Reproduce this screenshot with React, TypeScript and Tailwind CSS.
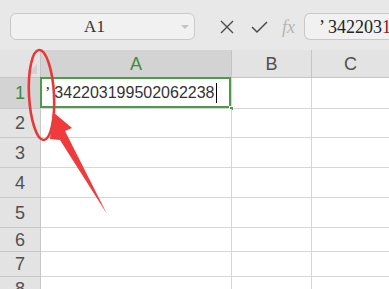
import React from 'react';

const rows = [
  { n: 1, h: 'h-[31px]' },
  { n: 2, h: 'h-[29px]' },
  { n: 3, h: 'h-[30px]' },
  { n: 4, h: 'h-[30px]' },
  { n: 5, h: 'h-[30px]' },
  { n: 6, h: 'h-[24px]' },
  { n: 7, h: 'h-[25px]' },
  { n: 8, h: 'h-[25px]' },
];

const sans = "font-['Liberation_Sans','Noto_Sans',sans-serif]";
const serif = "font-['Liberation_Serif','Noto_Sans_CJK_SC',serif]";

function Toolbar() {
  return (
    <div className="h-[50px] flex items-start pt-[13px] pl-[10px] bg-[#e8e8e8]">
      {/* name box */}
      <div className="w-[185px] h-[27px] rounded-[6px] border border-[#c9c9c9] bg-[#f1f1f1] relative flex items-center justify-center pr-[16px]">
        <span className={`${serif} text-[17px] text-[#333] leading-none`}>A1</span>
        <svg width="8" height="5" viewBox="0 0 8 5" className="absolute right-[5px] top-[11px]">
          <path d="M0 0 L8 0 L4 4 Z" fill="#c4c4c4" />
        </svg>
      </div>
      {/* actions */}
      <div className="flex items-center h-[27px] ml-[24px] gap-[16px]">
        <svg width="16" height="16" viewBox="0 0 16 16" fill="none" stroke="#4a4a4a" strokeWidth="1.4">
          <path d="M2 2 L14 14 M14 2 L2 14" />
        </svg>
        <svg width="17" height="14" viewBox="0 0 17 14" fill="none" stroke="#4a4a4a" strokeWidth="1.5">
          <path d="M1 7 L6 12 L16 2" />
        </svg>
        <span className={`${serif} italic text-[18px] text-[#b5b5b5] leading-none -ml-[2px]`}>fx</span>
      </div>
      {/* formula box */}
      <div className="ml-[9px] flex-1 h-[27px] rounded-l-[6px] border border-r-0 border-[#c9c9c9] bg-[#f1f1f1] flex items-center pl-[14px] overflow-hidden whitespace-nowrap">
        <span className={`${serif} text-[18px] text-[#222] leading-none`}>
          ’<span className="ml-[3px]">342203</span><span className="text-[#8b1a1a]">1</span>
        </span>
      </div>
    </div>
  );
}

function HeaderRow() {
  return (
    <div className={`${sans} grid grid-cols-[41px_191px_80px_1fr] h-[28px] text-[18px] leading-none`}>
      <div className="bg-[#e3e3e3] border-r border-b border-[#c4c4c4] relative">
        <svg width="10" height="10" viewBox="0 0 10 10" className="absolute right-[3px] bottom-[3px]">
          <path d="M10 0 L10 10 L0 10 Z" fill="#d2d2d2" />
        </svg>
      </div>
      <div className="bg-[#d3d3d3] border-r border-b border-[#c4c4c4] flex items-center justify-center text-[#3d8b3d]">A</div>
      <div className="bg-[#e3e3e3] border-r border-b border-[#c4c4c4] flex items-center justify-center text-[#505050]">B</div>
      <div className="bg-[#e3e3e3] border-b border-[#c4c4c4] flex items-center justify-center text-[#505050]">C</div>
    </div>
  );
}

function Row({ n, h }: { n: number; h: string }) {
  const first = n === 1;
  return (
    <div className={`grid grid-cols-[41px_191px_80px_1fr] ${h} ${sans}`}>
      <div
        className={`border-r border-b border-[#c8c8c8] flex items-center justify-center text-[18px] leading-none ${
          first ? 'bg-[#d3d3d3] text-[#3d8b3d]' : 'bg-[#e3e3e3] text-[#505050]'
        }`}
      >
        {n}
      </div>
      <div className="bg-white border-r border-b border-[#d6d6d6] relative">
        {first && (
          <>
            <div className="absolute -left-[1px] -top-[1px] right-0 bottom-0 border-2 border-[#4b9b4b] flex items-center pl-[3px] whitespace-nowrap">
              <span className="text-[16px] text-[#333] leading-none">
                <span className={serif}>’</span>
                <span className="ml-[4px]">342203199502062238</span>
              </span>
              <span className="w-px h-[20px] bg-black ml-[1px]" />
            </div>
            <div className="absolute -right-[3px] -bottom-[3px] w-[5px] h-[5px] bg-[#4b9b4b] border border-white" />
          </>
        )}
      </div>
      <div className="bg-white border-r border-b border-[#d6d6d6]" />
      <div className="bg-white border-b border-[#d6d6d6]" />
    </div>
  );
}

export default function App() {
  return (
    <div className="w-[389px] h-[289px] overflow-hidden bg-white relative">
      <Toolbar />
      <HeaderRow />
      {rows.map((r) => (
        <Row key={r.n} n={r.n} h={r.h} />
      ))}

      {/* annotation overlay */}
      <svg className="absolute inset-0 pointer-events-none" width="389" height="289" viewBox="0 0 389 289">
        <ellipse cx="41.5" cy="95" rx="12.5" ry="45" transform="rotate(-3 41.5 95)" fill="none" stroke="#e8383a" strokeWidth="2.6" />
        <polygon points="53,112 72,128 65,131 107,214 60,140 50,139" fill="#ef3b3b" />
      </svg>
    </div>
  );
}
